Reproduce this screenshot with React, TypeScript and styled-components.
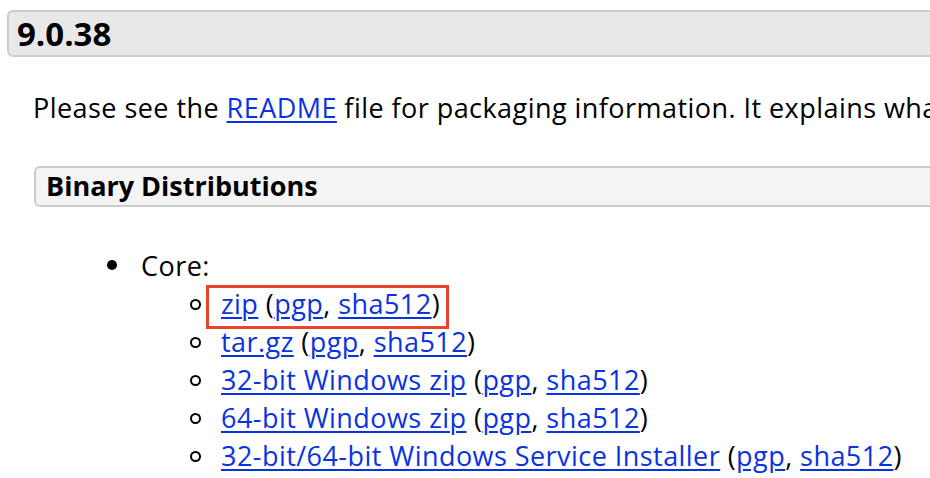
import styled, {createGlobalStyle} from "styled-components";

const GlobalStyle = createGlobalStyle`
  html, body {
    margin: 0;
    padding: 0;
    background: #fff;
    overflow: hidden;
  }
  body {
    font-family: "Open Sans", "DejaVu Sans", sans-serif;
    color: #000;
  }
`;

const Page = styled.div`
  width: 930px;
  height: 478px;
  overflow: hidden;
  padding-top: 10px;
  box-sizing: border-box;
  white-space: nowrap;
`;

const VersionBar = styled.h3`
  margin: 0 -40px 0 7px;
  padding: 5px 8px;
  height: 33px;
  background: #e8e8e8;
  border: 2px solid #cccccc;
  border-radius: 6px;
  font-size: 33px;
  line-height: 33px;
  font-weight: 700;
`;

const Section = styled.div`
  padding-left: 33px;
`;

const Para = styled.p`
  margin: 32px 0 0;
  font-size: 27px;
  letter-spacing: 0.45px;
  line-height: 38px;
  overflow: hidden;
`;

const SubBar = styled.h4`
  margin: 39px -40px 0 1px;
  padding: 4px 10px 5px;
  background: #f4f4f4;
  border: 2px solid #cccccc;
  border-radius: 6px;
  font-size: 27px;
  line-height: 28px;
  font-weight: 700;
`;

const List = styled.ul<{$indent: number; $top?: number}>`
  list-style: none;
  margin: ${(p) => p.$top || 0}px 0 0;
  padding: 0 0 0 ${(p) => p.$indent}px;
  font-size: 27px;
  letter-spacing: 0.45px;
  line-height: 38px;
`;

const Item = styled.li<{$open?: boolean}>`
  position: relative;
  &::before {
    content: "";
    position: absolute;
    box-sizing: border-box;
    width: ${(p) => (p.$open ? 11 : 10)}px;
    height: ${(p) => (p.$open ? 11 : 10)}px;
    border-radius: 50%;
    left: ${(p) => (p.$open ? -31 : -34)}px;
    top: ${(p) => (p.$open ? 14 : 13)}px;
    background: ${(p) => (p.$open ? "transparent" : "#000")};
    border: ${(p) => (p.$open ? "2px solid #000" : "none")};
  }
`;

const Link = styled.a`
  color: #0a33e0;
  text-decoration: underline;
  text-decoration-thickness: 2px;
  text-underline-offset: 3px;
`;

const Highlight = styled.span`
  position: relative;
  &::after {
    content: "";
    position: absolute;
    left: -15px;
    right: -9px;
    top: 0;
    bottom: -7px;
    border: 3px solid #e8452c;
  }
`;

const downloads = [
  {name: "tar.gz"},
  {name: "32-bit Windows zip"},
  {name: "64-bit Windows zip"},
  {name: "32-bit/64-bit Windows Service Installer"},
];

const Sigs = () => (
  <>
    {" "}(<Link href="#">pgp</Link>, <Link href="#">sha512</Link>)
  </>
);

export default function App() {
  return (
    <Page>
      <GlobalStyle />
      <VersionBar>9.0.38</VersionBar>
      <Section>
        <Para>
          Please see the <Link href="#">README</Link> file for packaging
          information. It explains wha
        </Para>
        <SubBar>Binary Distributions</SubBar>
        <List $indent={108} $top={40}>
          <Item>
            Core:
            <List $indent={80}>
              <Item $open>
                <Highlight>
                  <Link href="#">zip</Link>
                  <Sigs />
                </Highlight>
              </Item>
              {downloads.map((d) => (
                <Item $open key={d.name}>
                  <Link href="#">{d.name}</Link>
                  <Sigs />
                </Item>
              ))}
            </List>
          </Item>
        </List>
      </Section>
    </Page>
  );
}
